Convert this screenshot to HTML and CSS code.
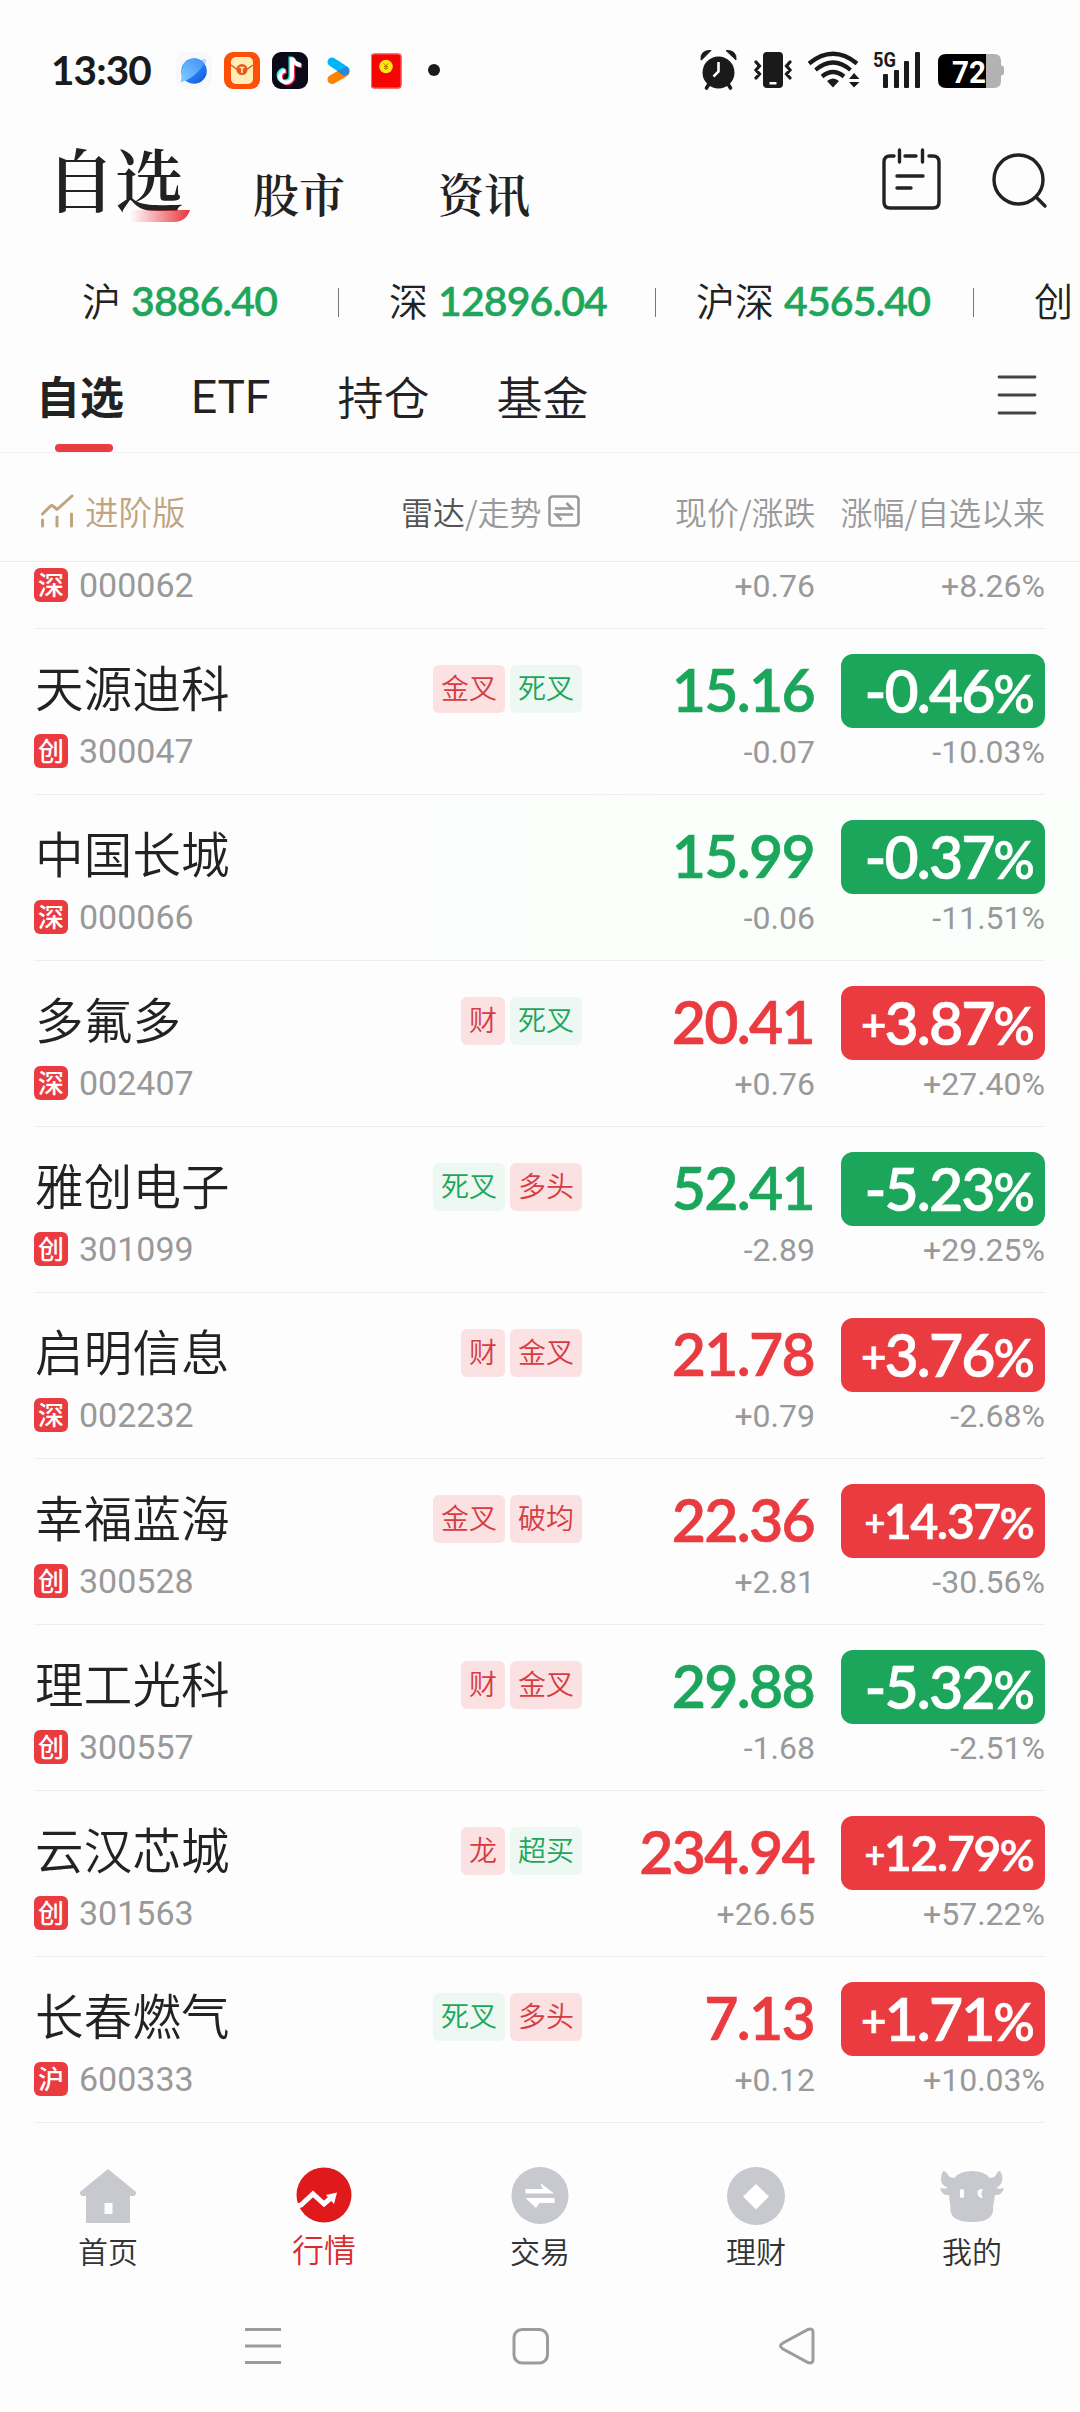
FILE: index.html
```html
<!DOCTYPE html>
<html lang="zh-CN">
<head>
<meta charset="utf-8">
<title>自选</title>
<link rel="stylesheet" href="styles.css">
</head>
<body>
<div class="statusbar">
  <span class="time">13:30</span>
  <div class="apps">
    <svg width="36" height="37" viewBox="0 0 36 37"><defs><linearGradient id="pl" x1="0" y1="0" x2="1" y2="1"><stop offset="0" stop-color="#5aaaff"/><stop offset=".5" stop-color="#2f80f5"/><stop offset="1" stop-color="#0a52d8"/></linearGradient><linearGradient id="pm" x1="0" y1="1" x2="1" y2="0"><stop offset="0" stop-color="#7fd0ff"/><stop offset="1" stop-color="#3f8dfa"/></linearGradient></defs><rect width="36" height="37" rx="9" fill="#f7f8fa"/><path d="M26 7.500Q31 5 30 10Q29 13 27 15Z" fill="#b5dcff"/><circle cx="18" cy="19" r="12.800" fill="url(#pl)"/><path d="M6 30Q4 31 5.500 26Q4.500 16 10 9.500Q20 2.500 28.500 11.500Q20 25 6 30Z" fill="url(#pm)"/></svg>
    <svg width="36" height="37" viewBox="0 0 36 37"><rect width="36" height="37" rx="9" fill="#ff4f07"/><rect x="7" y="5" width="22" height="27" rx="5" fill="#ffedb5"/><path d="M7 13L14 18H22L29 13" fill="none" stroke="#e8591b" stroke-width="1.500"/><circle cx="18" cy="17.500" r="5.500" fill="#e8571a"/><path d="M15.500 15.500H20.500M18 15.500V21" stroke="#ffedb5" stroke-width="1.600"/></svg>
    <svg width="36" height="37" viewBox="0 0 36 37"><rect width="36" height="37" rx="9" fill="#0b0a18"/><g fill="none" stroke-width="4"><path d="M19.500 5V24A6 6 0 1 1 13 18M20 6Q22 12 28.500 12.500" stroke="#2af0ea" transform="translate(-1 -.5)"/><path d="M20.500 6V25A6 6 0 1 1 14 19M21 7Q23 13 29.500 13.500" stroke="#fe2c55" transform="translate(.6 .5)"/><path d="M20 5.500V24.500A6 6 0 1 1 13.500 18.500M20.500 6.500Q22.500 12.500 29 13" stroke="#fff"/></g></svg>
    <svg width="36" height="37" viewBox="0 0 36 37"><path d="M12 27.500L25 20" stroke="#ff8200" stroke-width="9" stroke-linecap="round"/><path d="M12 10L25 18.500" stroke="#00b4f8" stroke-width="9" stroke-linecap="round"/><path d="M17 19L27 14.500Q31 19 28 22L24 24Z" fill="#2a86d8"/></svg>
    <svg width="36" height="37" viewBox="0 0 36 37"><rect x="3" y="1.500" width="30.500" height="35" rx="3" fill="#f60504"/><rect x="3.500" y="2" width="29.500" height="34" rx="3" fill="none" stroke="#ff6a63"/><circle cx="18" cy="14.500" r="6.800" fill="#ffe713"/><path d="M16 11.500L18 14L20 11.500M18 14V18M16 14.500H20M16 16.300H20" fill="none" stroke="#b07b00"/></svg>
    <i class="dot"></i>
  </div>
  <svg class="sys" width="310" height="42" viewBox="0 0 310 42" fill="#1a1a1a">
    <circle cx="18.500" cy="23.500" r="16"/><path d="M1 11Q0 1 11 1.500L1.500 11ZM36 11Q37 1 26 1.500Z" stroke="#1a1a1a" stroke-width="1"/><path d="M9 35L6.500 39M28 35L30.500 39" stroke="#1a1a1a" stroke-width="3.600" stroke-linecap="round"/><path d="M18.500 13V22.500L13.500 27.500" fill="none" stroke="#fff" stroke-width="2.600"/>
    <rect x="63" y="3" width="20" height="36" rx="4"/><rect x="69.500" y="33" width="7" height="2.500" fill="#fff"/><path d="M56 13L59.500 17L56 21L59.500 25L56 29M90 13L86.500 17L90 21L86.500 25L90 29" fill="none" stroke="#1a1a1a" stroke-width="3.200" stroke-linecap="round"/>
    <g fill="none" stroke="#1a1a1a" stroke-width="4.200"><path d="M109 14.500Q133 -5 157 14.500M115.500 21Q133 6 150.500 21M122 27.500Q133 18.500 144 27.500"/></g><path d="M127 32Q133 27 139 32L133 38.500Z"/><path d="M149 30L154 24L159.500 30ZM149 33L154 38.500L159.500 33Z"/>
    <text x="173" y="17.500" class="net" textLength="23" lengthAdjust="spacingAndGlyphs">5G</text>
    <rect x="183" y="25" width="5" height="14" rx="1"/><rect x="194" y="21" width="5" height="18" rx="1"/><rect x="204" y="12" width="5" height="27" rx="1"/><rect x="215" y="3" width="5" height="36" rx="1"/>
    <path d="M284 5H294Q301 5 301 12V16L304 18V25L301 27V32Q301 39 294 39H284Z" fill="#b2b2b2"/><path d="M246 5H286V39H246Q238 39 238 31V13Q238 5 246 5Z" fill="#000"/><text x="252" y="34" class="batt" textLength="34" lengthAdjust="spacingAndGlyphs">72</text>
  </svg>
</div>

<header class="header">
  <div class="h-main">自选<svg class="swoosh" width="60" height="12" viewBox="0 0 60 12"><defs><linearGradient id="sw"><stop offset="0" stop-color="#e93b40" stop-opacity="0"/><stop offset="1" stop-color="#e8353b"/></linearGradient></defs><path d="M0 0H60Q56 12 44 12H0Z" fill="url(#sw)"/></svg></div>
  <div class="h-sub">股市</div>
  <div class="h-sub">资讯</div>
  <svg class="h-icons" width="170" height="66" viewBox="0 0 170 66" fill="none" stroke="#222" stroke-width="3.400" stroke-linecap="round"><path d="M13 9H9Q3 9 3 15V55Q3 61 9 61H52Q58 61 58 55V15Q58 9 52 9H48M24 9H35M18.500 3V15M41.500 3V15M16 29H42M16 41H30"/><circle cx="137.500" cy="32.500" r="24.500"/><path d="M155 50L164 59"/></svg>
</header>

<div class="indices">
  <span class="idx">沪<b>3886.40</b></span><i></i>
  <span class="idx">深<b>12896.04</b></span><i></i>
  <span class="idx">沪深<b>4565.40</b></span><i></i>
  <span class="idx">创</span>
</div>

<nav class="tabs">
  <span class="tab on">自选</span><span class="tab en">ETF</span><span class="tab">持仓</span><span class="tab">基金</span>
  <svg class="menu" width="40" height="40" viewBox="0 0 40 40" stroke="#444" stroke-width="2.800" stroke-linecap="round"><path d="M2 2H38M2 20H38M2 38H38"/></svg>
</nav>

<div class="cols">
  <div class="c1"><svg width="34" height="34" viewBox="0 0 34 34" fill="none" stroke="#bfa47f" stroke-width="3" stroke-linecap="round" stroke-linejoin="round"><path d="M2.500 20L10.500 12Q12 11 13.500 12.500L17 15.500L32 2M2.500 26V32M17 23V32M31.500 20V32"/></svg>进阶版</div>
  <div class="c2"><b>雷达</b>/走势<svg width="32" height="32" viewBox="0 0 32 32" fill="none" stroke="#999" stroke-width="2.600"><rect x="1.500" y="1.500" width="29" height="29" rx="3"/><path d="M7 13.500H24L18.500 8M25 19.500H8L13.500 25"/></svg></div>
  <div class="c3">现价/涨跌</div>
  <div class="c4">涨幅/自选以来</div>
</div>

<main class="list" id="list"></main>

<nav class="bottom">
  <a><svg width="58" height="58" viewBox="0 0 58 58"><path d="M29 2L57 25Q58 27 55 29H51V56H7V29H3Q0 27 1 25ZM25.500 36V47H33.500V36Z" fill="#c8c9ce" fill-rule="evenodd"/></svg><span>首页</span></a>
  <a class="on"><svg width="58" height="58" viewBox="0 0 58 58"><circle cx="29" cy="28" r="27.500" fill="#e0191c"/><path d="M0 39.500L6 38L18 27L29 37L37 30" fill="none" stroke="#fff" stroke-width="5"/><path d="M31 28L42 25.500L39 37Z" fill="#fff"/></svg><span>行情</span></a>
  <a><svg width="58" height="58" viewBox="0 0 58 58"><circle cx="29" cy="28.500" r="28.500" fill="#c8c9ce"/><path d="M14.500 22H31.500L29.500 16L43 26.500H14.500ZM43.500 31H14.500L25 41L28.500 36H43.500Z" fill="#fff"/></svg><span>交易</span></a>
  <a><svg width="58" height="58" viewBox="0 0 58 58"><circle cx="29" cy="29" r="29" fill="#c8c9ce"/><path d="M29 17L42 29.500L29 42.500L16 29.500Z" fill="#fff"/></svg><span>理财</span></a>
  <a><svg width="64" height="58" viewBox="0 0 64 58"><path d="M3 4Q6 4 8 8Q10 11 14 11Q20 4 32 4Q44 4 50 11Q54 11 56 8Q57 4 60 4Q65 12 60 18Q57 21 56 21Q60 22 64 21Q62 29 55 28L53 40Q55 55 32 55Q9 55 10.500 40L9 28Q2 29 0 21Q4 22 8 21Q-3 17 3 4Z" fill="#c8c9ce"/><rect x="20" y="22" width="4" height="9" rx="2" fill="#fff"/><path d="M43 22Q37 22 37.500 26Q38 31 43 31Q40 26.500 43 22Z" fill="#fff"/></svg><span>我的</span></a>
</nav>
<div class="sysnav">
  <svg width="1080" height="44" viewBox="0 0 1080 44" fill="none" stroke="#9c9c9c" stroke-width="3"><path d="M245 5.500H281M245 22H281M245 38.500H281"/><rect x="514" y="5.500" width="33.500" height="33.500" rx="8"/><path d="M808 5.500Q813 4 813 8V36Q813 40 808 38.500L783 25Q778 22 783 19Z"/></svg>
</div>
<script src="rows.js"></script>
</body>
</html>
```
FILE: styles.css
```css
* { box-sizing: border-box; }
body {
  margin: 0;
  width: 1080px;
  height: 2412px;
  overflow: hidden;
  background: #fdfdfd;
  color: #222;
  font-family: Roboto, "Noto Sans CJK SC", sans-serif;
  display: flex;
  flex-direction: column;
}
svg { display: block; flex: none; }
.statusbar { height: 120px; padding: 20px 70px 0 51px; display: flex; align-items: center; }
.time { font: 700 40.500px/50px Lato, sans-serif; letter-spacing: -.9px; width: 125px; color: #1a1a1a; white-space: nowrap; }
.apps { display: flex; gap: 12px; align-items: center; flex: 1; }
.dot { width: 12px; height: 12px; border-radius: 50%; background: #1a1a1a; margin-left: 12px; }
.net { font: 700 21px Roboto, sans-serif; }
.batt { font: 700 32px Roboto, sans-serif; fill: #fff; }

.header { height: 130px; display: flex; align-items: flex-start; padding-left: 46px; font-family: "Noto Serif CJK SC", "Noto Serif SC", "Noto Sans CJK SC", serif; }
.h-main { position: relative; font-size: 69px; line-height: 80px; margin-top: 18px; width: 207px; font-weight: 600; }
.swoosh { position: absolute; left: 84px; top: 72px; }
.h-sub { font-size: 46px; line-height: 60px; margin-top: 42px; font-weight: 600; width: 185px; }
.h-icons { margin: 27px 0 0 258px; }

.indices { height: 104px; padding: 0 0 3px 82px; display: flex; align-items: center; font-size: 39px; white-space: nowrap; font-weight: 350; }
.indices b { font: 600 41px/60px Lato, sans-serif; color: #1ea65c; letter-spacing: -.9px; margin-left: 10px; margin-top: 3px; -webkit-text-stroke: .4px; }
.indices i { width: 1px; height: 29px; background: #777; flex: none; margin-top: 3px; }
.idx { flex: none; display: flex; align-items: center; line-height: 60px; margin-top: -3px; font-family: "Noto Sans CJK SC", sans-serif; }
.idx:nth-of-type(1) { width: 256px; }
.idx:nth-of-type(2) { width: 316px; padding-left: 50px; }
.idx:nth-of-type(3) { width: 317px; padding-left: 40px; }
.idx:nth-of-type(4) { padding-left: 60px; }

.tabs { height: 99px; border-bottom: 1px solid #f1f1f1; display: flex; font-size: 46px; line-height: 82px; padding-left: 36px; font-family: "Noto Sans CJK SC", sans-serif; font-weight: 350; }
.tab { margin-right: 67px; position: relative; }
.tab.en { font-family: Roboto, sans-serif; font-weight: 400; line-height: 86px; }
.tab.on { font-weight: 700; font-size: 44px; }
.tab.on::after { content: ""; position: absolute; left: 19px; bottom: 0; width: 58px; height: 8px; border-radius: 4px; background: #e93b40; }
.menu { margin: 21px 43px 0 auto; }

.cols { height: 109px; border-bottom: 1px solid #ececec; display: flex; align-items: center; font-size: 32px; color: #999; padding: 7px 35px 0 40px; white-space: nowrap; font-weight: 350; font-family: "Noto Sans CJK SC", sans-serif; }
.cols > div { display: flex; align-items: center; }
.c1 { color: #bfa47f; font-size: 33.500px; width: 361px; }
.c1 svg { margin-right: 11px; }
.c2 b { font-weight: 350; color: #555; }
.c2 svg { margin-left: 6px; }
.c3 { margin-left: auto; }
.c4 { margin-left: 25px; }

.list { height: 1561px; overflow: hidden; }
.row { height: 166px; padding: 0 35px 0 34px; display: grid; grid-template-columns: 300px 1fr 233px 230px; grid-template-rows: 99px 66px; }
.row.part { height: 67px; grid-template-rows: 66px; }
.row::after { content: ""; grid-column: 1 / -1; height: 1px; background: #eee; }
.row.lit { background: linear-gradient(90deg, transparent 25%, #fafffb 65%); }
.name { font-family: "Noto Sans CJK SC", sans-serif; font-weight: 350; font-size: 48.500px; letter-spacing: .2px; line-height: 72px; padding: 21px 0 0 1px; white-space: nowrap; }
.tags { display: flex; gap: 5px; justify-content: flex-end; padding-top: 36px; font-family: "Noto Sans CJK SC", sans-serif; font-weight: 350; }
.tags span { height: 48px; padding: 0 8px; border-radius: 6px; font-size: 28px; line-height: 45px; white-space: nowrap; }
.tags .r { background: #fce1e3; color: #d63c42; }
.tags .g { background: #ecf8f1; color: #1ea65c; }
.price { font: 600 59px/70px Lato, sans-serif; letter-spacing: -1.700px; text-align: right; padding: 26px 1px 0 0; -webkit-text-stroke: .6px; white-space: nowrap; }
.r .price { color: #e93b40; }
.g .price { color: #1ba65b; }
.pct { margin: 25px 0 0 26px; height: 74px; border-radius: 12px; color: #fff; font: 600 59px/73px Lato, sans-serif; letter-spacing: -1.900px; -webkit-text-stroke: .6px; text-align: right; padding-right: 12px; white-space: nowrap; }
.pct small { font-size: 51px; }
.pct .plus { font-size: 44px; line-height: 0; vertical-align: 4px; }
.pct.sm { font-size: 48.500px; letter-spacing: -1.600px; }
.pct.sm small { font-size: 43px; }
.pct.sm .plus { font-size: 36px; vertical-align: 3px; }
.r .pct { background: #e93b40; }
.g .pct { background: #1ba65b; }
.code { display: flex; align-items: center; font-size: 34px; color: #999; height: 46px; }
.code i { font: 500 26px/32px "Noto Sans CJK SC", sans-serif; background: #e93b40; color: #fff; width: 34px; height: 34px; border-radius: 6px; text-align: center; margin-right: 11px; }
.num { font-size: 32px; line-height: 48px; color: #999; text-align: right; grid-column: 3; }
.num + .num { grid-column: 4; }

.bottom { height: 160px; display: flex; padding-top: 44px; font-family: "Noto Sans CJK SC", sans-serif; font-weight: 350; }
.bottom a { width: 216px; display: flex; flex-direction: column; align-items: center; font-size: 30px; line-height: 36px; color: #333; }
.bottom span { margin-top: 7px; }
.bottom .on { color: #d92b2f; font-size: 32px; }
.bottom .on span { margin-top: 5px; }
.sysnav { padding-top: 41px; }
```
FILE: rows.js
```js
// name, market, code, tags, price, change %, change, change since added
const rows = [
  ['', '深', '000062', [], '', '', '+0.76', '+8.26%'],
  ['天源迪科', '创', '300047', ['r金叉', 'g死叉'], '15.16', '-0.46', '-0.07', '-10.03%'],
  ['中国长城', '深', '000066', [], '15.99', '-0.37', '-0.06', '-11.51%'],
  ['多氟多', '深', '002407', ['r财', 'g死叉'], '20.41', '+3.87', '+0.76', '+27.40%'],
  ['雅创电子', '创', '301099', ['g死叉', 'r多头'], '52.41', '-5.23', '-2.89', '+29.25%'],
  ['启明信息', '深', '002232', ['r财', 'r金叉'], '21.78', '+3.76', '+0.79', '-2.68%'],
  ['幸福蓝海', '创', '300528', ['r金叉', 'r破均'], '22.36', '+14.37', '+2.81', '-30.56%'],
  ['理工光科', '创', '300557', ['r财', 'r金叉'], '29.88', '-5.32', '-1.68', '-2.51%'],
  ['云汉芯城', '创', '301563', ['r龙', 'g超买'], '234.94', '+12.79', '+26.65', '+57.22%'],
  ['长春燃气', '沪', '600333', ['g死叉', 'r多头'], '7.13', '+1.71', '+0.12', '+10.03%']
];

const upper = r => `
  <div class="name">${r[0]}</div>
  <div class="tags">${r[3].map(t => `<span class="${t[0]}">${t.slice(1)}</span>`).join('')}</div>
  <div class="price">${r[4]}</div>
  <div class="pct${r[5].length > 5 ? ' sm' : ''}">${r[5].replace('+', '<span class="plus">+</span>')}<small>%</small></div>`;

document.getElementById('list').innerHTML = rows.map((r, i) => `
<section class="row ${r[5][0] === '-' ? 'g' : 'r'}${i === 2 ? ' lit' : ''}${r[0] ? '' : ' part'}">${r[0] ? upper(r) : ''}
  <div class="code"><i>${r[1]}</i>${r[2]}</div>
  <div class="num">${r[6]}</div><div class="num">${r[7]}</div>
</section>`).join('');
```
